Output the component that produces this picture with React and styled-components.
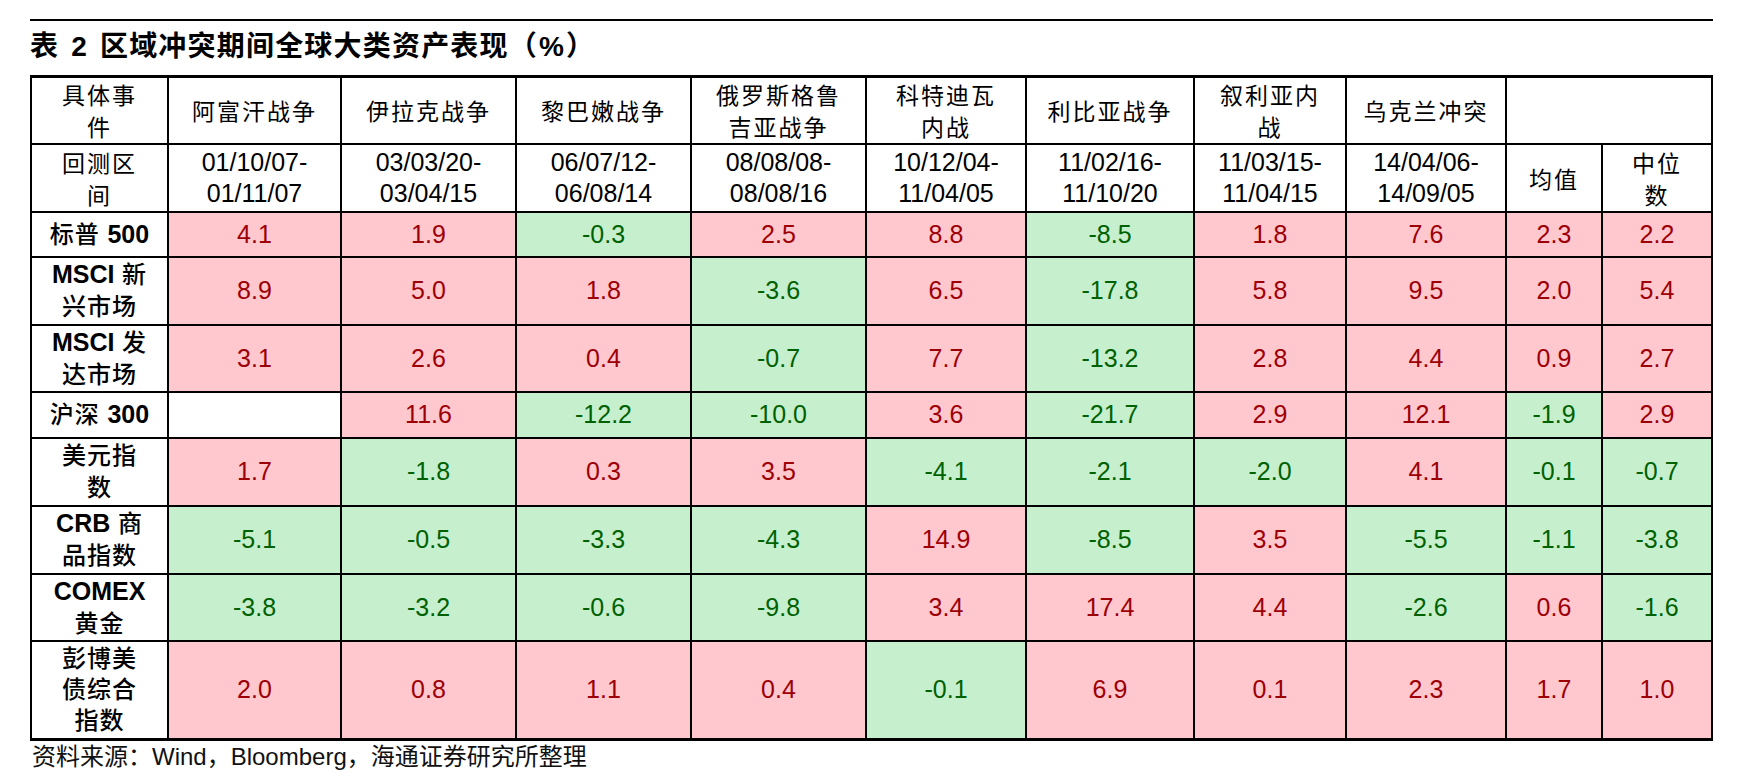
import React from "react";
import styled, { createGlobalStyle } from "styled-components";

const Global = createGlobalStyle`
  html, body { margin: 0; padding: 0; background: #fff; }
  body { font-family: "Liberation Sans", "Noto Sans CJK SC", sans-serif; color: #000; }
`;

const Page = styled.div`
  width: 1683px;
  padding: 19px 0 0 30px;
`;

const TopRule = styled.div`
  border-top: 2px solid #000;
  width: 1683px;
`;

const Title = styled.h1`
  margin: 6px 0 8px 0;
  font-family: "Liberation Sans", "Noto Sans CJK SC", sans-serif;
  font-size: 28px;
  line-height: 40px;
  font-weight: 700;
  letter-spacing: 1.2px;
  white-space: nowrap;
`;

const Gap = styled.span`
  display: inline-block;
  width: ${(p) => p.$w}px;
`;

const Table = styled.table`
  width: 1681px;
  border-collapse: collapse;
  table-layout: fixed;
  border-top: 3px solid #000;
  border-bottom: 3px solid #000;
  border-left: 2px solid #000;
  border-right: 2px solid #000;
`;

const Row = styled.tr`
  height: ${(p) => p.$h}px;
`;

const HeadCell = styled.td`
  border: 2px solid #000;
  padding: 0;
  text-align: center;
  vertical-align: middle;
  font-family: "Noto Sans CJK SC", sans-serif;
  font-size: 23px;
  letter-spacing: 2px;
  line-height: 32px;
  font-weight: 400;
`;

const DateCell = styled.td`
  border: 2px solid #000;
  padding: 0;
  text-align: center;
  vertical-align: middle;
  font-family: "Liberation Sans", sans-serif;
  font-size: 25px;
  line-height: 31px;
`;

const LabelCell = styled.td`
  border: 2px solid #000;
  padding: 0;
  text-align: center;
  vertical-align: middle;
  font-family: "Liberation Sans", "Noto Sans CJK SC", sans-serif;
  font-size: 24px;
  line-height: ${(p) => (p.$tight ? 31 : 32)}px;
  font-weight: 500;
  letter-spacing: 1px;
`;

const Latin = styled.span`
  font-family: "Liberation Sans", sans-serif;
  font-weight: 700;
  font-size: 25px;
  letter-spacing: 0;
`;

const ValueCell = styled.td`
  border: 2px solid #000;
  padding: 0;
  text-align: center;
  vertical-align: middle;
  font-family: "Liberation Sans", sans-serif;
  font-size: 25px;
  background: ${(p) =>
    p.$tone === "up" ? "#FFC7CE" : p.$tone === "down" ? "#C6EFCE" : "#fff"};
  color: ${(p) =>
    p.$tone === "up" ? "#9C0006" : p.$tone === "down" ? "#006100" : "#000"};
`;

const Footer = styled.div`
  font-family: "Liberation Sans", "Noto Sans CJK SC", sans-serif;
  font-size: 24px;
  line-height: 32px;
  color: #111;
  padding-left: 2px;
`;

const colWidths = [137, 173, 175, 175, 175, 160, 168, 152, 160, 96, 110];

const events = [
  ["阿富汗战争"],
  ["伊拉克战争"],
  ["黎巴嫩战争"],
  ["俄罗斯格鲁", "吉亚战争"],
  ["科特迪瓦", "内战"],
  ["利比亚战争"],
  ["叙利亚内", "战"],
  ["乌克兰冲突"],
];

const periods = [
  ["01/10/07-", "01/11/07"],
  ["03/03/20-", "03/04/15"],
  ["06/07/12-", "06/08/14"],
  ["08/08/08-", "08/08/16"],
  ["10/12/04-", "11/04/05"],
  ["11/02/16-", "11/10/20"],
  ["11/03/15-", "11/04/15"],
  ["14/04/06-", "14/09/05"],
];

const rows = [
  { label: ["标普 500"], h: 45, v: ["4.1", "1.9", "-0.3", "2.5", "8.8", "-8.5", "1.8", "7.6", "2.3", "2.2"] },
  { label: ["MSCI 新", "兴市场"], h: 68, v: ["8.9", "5.0", "1.8", "-3.6", "6.5", "-17.8", "5.8", "9.5", "2.0", "5.4"] },
  { label: ["MSCI 发", "达市场"], h: 67, v: ["3.1", "2.6", "0.4", "-0.7", "7.7", "-13.2", "2.8", "4.4", "0.9", "2.7"] },
  { label: ["沪深 300"], h: 46, v: ["", "11.6", "-12.2", "-10.0", "3.6", "-21.7", "2.9", "12.1", "-1.9", "2.9"] },
  { label: ["美元指", "数"], h: 68, v: ["1.7", "-1.8", "0.3", "3.5", "-4.1", "-2.1", "-2.0", "4.1", "-0.1", "-0.7"] },
  { label: ["CRB 商", "品指数"], h: 68, v: ["-5.1", "-0.5", "-3.3", "-4.3", "14.9", "-8.5", "3.5", "-5.5", "-1.1", "-3.8"] },
  { label: ["COMEX", "黄金"], h: 66, v: ["-3.8", "-3.2", "-0.6", "-9.8", "3.4", "17.4", "4.4", "-2.6", "0.6", "-1.6"] },
  { label: ["彭博美", "债综合", "指数"], h: 99, v: ["2.0", "0.8", "1.1", "0.4", "-0.1", "6.9", "0.1", "2.3", "1.7", "1.0"] },
];

const Lines = ({ lines, render }) =>
  lines.map((l, i) => (
    <React.Fragment key={i}>
      {i > 0 && <br />}
      {render ? render(l) : l}
    </React.Fragment>
  ));

const renderLabel = (line) =>
  line.split(/([A-Za-z0-9]+)/).map((part, i) =>
    /^[A-Za-z0-9]+$/.test(part) ? <Latin key={i}>{part}</Latin> : <React.Fragment key={i}>{part}</React.Fragment>
  );

const tone = (v) => (v === "" ? "none" : v.startsWith("-") ? "down" : "up");

export default function App() {
  return (
    <>
      <Global />
      <Page>
        <TopRule />
        <Title>
          表<Gap $w={3} /> 2<Gap $w={3} /> 区域冲突期间全球大类资产表现（<Gap $w={1} />%<Gap $w={1} />）
        </Title>
        <Table>
          <colgroup>
            {colWidths.map((w, i) => (
              <col key={i} style={{ width: w }} />
            ))}
          </colgroup>
          <tbody>
            <Row $h={67}>
              <HeadCell>
                <Lines lines={["具体事", "件"]} />
              </HeadCell>
              {events.map((e, i) => (
                <HeadCell key={i}>
                  <Lines lines={e} />
                </HeadCell>
              ))}
              <HeadCell colSpan={2} />
            </Row>
            <Row $h={68}>
              <HeadCell>
                <Lines lines={["回测区", "间"]} />
              </HeadCell>
              {periods.map((p, i) => (
                <DateCell key={i}>
                  <Lines lines={p} />
                </DateCell>
              ))}
              <HeadCell>均值</HeadCell>
              <HeadCell>
                <Lines lines={["中位", "数"]} />
              </HeadCell>
            </Row>
            {rows.map((r, ri) => (
              <Row key={ri} $h={r.h}>
                <LabelCell $tight={r.label.length > 2}>
                  <Lines lines={r.label} render={renderLabel} />
                </LabelCell>
                {r.v.map((v, vi) => (
                  <ValueCell key={vi} $tone={tone(v)}>
                    {v}
                  </ValueCell>
                ))}
              </Row>
            ))}
          </tbody>
        </Table>
        <Footer>资料来源：Wind，Bloomberg，海通证券研究所整理</Footer>
      </Page>
    </>
  );
}
